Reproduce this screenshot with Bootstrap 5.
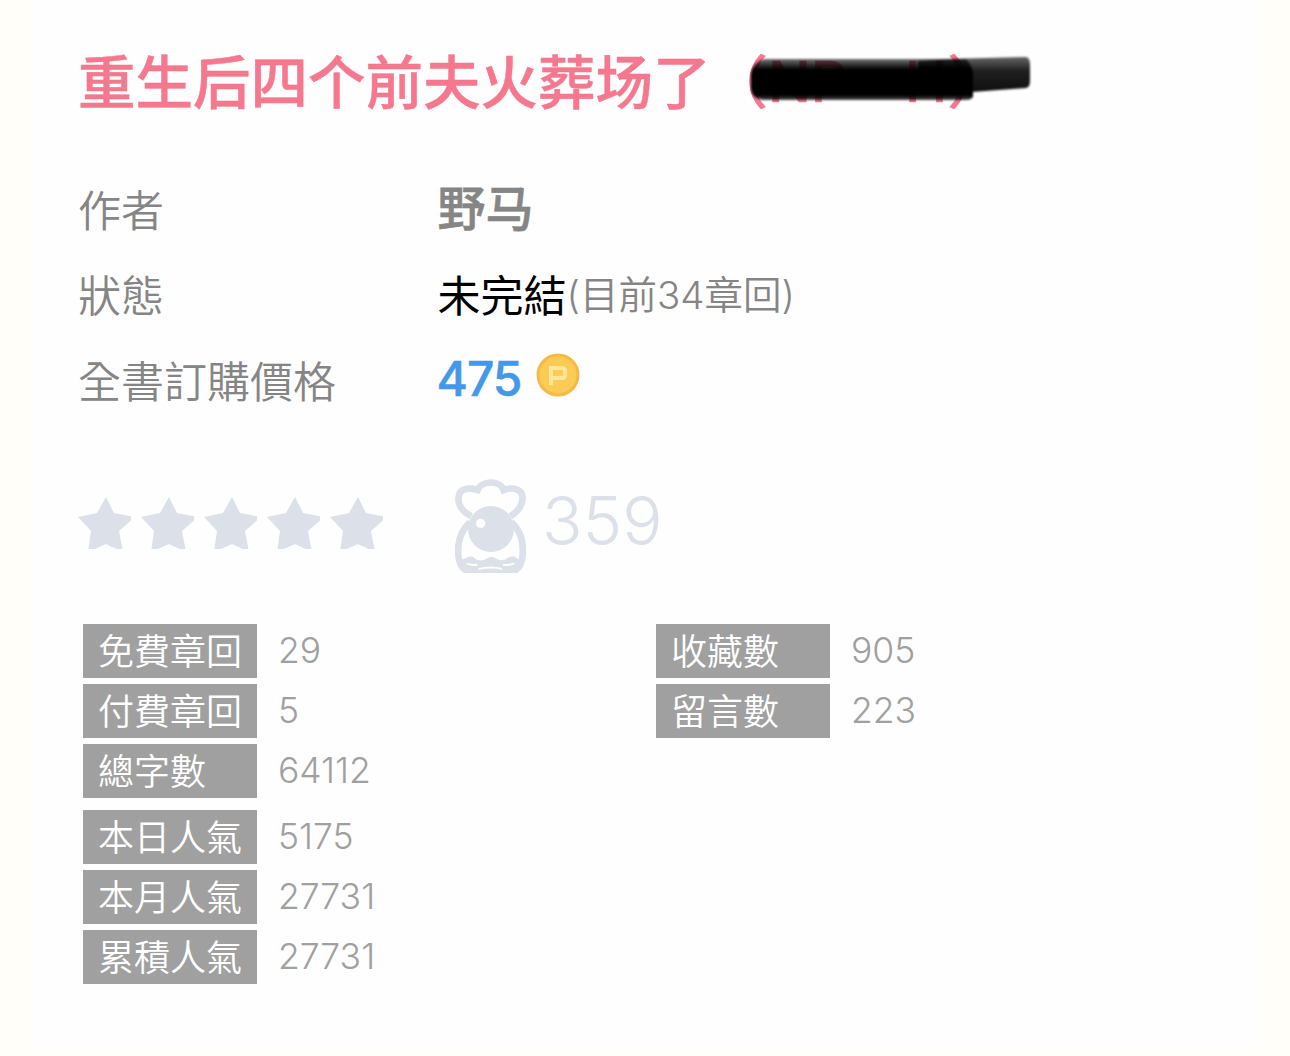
<!DOCTYPE html>
<html lang="zh-Hant">
<head>
    <title>重生后四个前夫火葬场了</title>
    <meta charset="UTF-8">
    <meta name="viewport" content="width=device-width, initial-scale=1">

    <!-- Bootstrap 5 CSS -->
    <link href="https://cdn.jsdelivr.net/npm/bootstrap@5.3.0/dist/css/bootstrap.min.css" rel="stylesheet">

    <!-- Custom Styles -->
    <style>
        body {
            background-color: #fffef8;
            font-family: Inter, "Noto Sans CJK TC", sans-serif;
            color: #858585;
            overflow: hidden;
        }

        .book-panel {
            width: 1225px;
            height: 1050px;
            margin-left: 32px;
            padding: 53px 47px 0 46px;
            background-color: #fefefe;
        }

        .book-title {
            height: 60px;
            font-family: Inter, "Noto Sans CJK SC", sans-serif;
            font-size: 57.5px;
            line-height: 60px;
            font-weight: 500;
            color: #f5788e;
            white-space: pre;
            -webkit-text-stroke: .5px #f5788e;
        }

        .title-latin {
            font-size: 56.5px;
            line-height: 1;
            vertical-align: 2px;
        }

        .title-gap {
            padding-left: 43px;
        }

        .scribble {
            left: 660px;
            top: -6px;
        }

        .info-list {
            margin-top: 55px;
            font-size: 43px;
            font-weight: 350;
        }

        .info-row {
            height: 85.5px;
        }

        .info-label {
            width: 359.5px;
        }

        .author-name {
            font-family: "Noto Sans CJK SC", sans-serif;
            font-size: 48px;
            font-weight: 500;
            line-height: 80px;
            -webkit-text-stroke: .6px #858585;
            padding-bottom: 12px;
        }

        .state-text {
            font-weight: 400;
        }

        .chapter-note {
            font-size: 38.5px;
        }

        .price {
            font-size: 48px;
            font-weight: 500;
            letter-spacing: -1.1px;
            color: #4398ea;
            -webkit-text-stroke: .5px #4398ea;
            padding-bottom: 5px;
            margin-left: -1px;
        }

        .coin {
            margin: 0 0 14px 15px;
        }

        .rating-row {
            height: 96px;
            margin-top: 53px;
        }

        .stars {
            gap: 10px;
            width: 377px;
            padding-bottom: 7px;
        }

        .icon-soft {
            filter: blur(.7px);
        }

        .heat {
            font-size: 67px;
            font-weight: 300;
            line-height: 80px;
            color: #dce0e8;
            padding-bottom: 10px;
            margin-left: 15px;
        }

        .stats {
            margin-top: 50px;
            padding-left: 5px;
            font-size: 36px;
            font-weight: 350;
            color: #a0a0a0;
        }

        .stat-col {
            width: 573px;
            gap: 6px;
            flex-shrink: 0;
        }

        .stat-row {
            height: 54px;
            gap: 21px;
        }

        .stat-split {
            margin-top: 6px;
        }

        .stat-label {
            width: 174px;
            padding-left: 15px;
            line-height: 56px;
            background-color: #a0a0a0;
        }

        .stat-value {
            font-size: 35.5px;
            line-height: 54px;
        }
    </style>
</head>
<body>

<div class="book-panel">
    <div class="position-relative">
        <h1 class="book-title mb-0">重生后四个前夫火葬场了（<span class="title-latin">NP <span class="title-gap"></span>H</span>）</h1>
        <svg class="scribble position-absolute" width="310" height="70" viewBox="0 0 310 70">
            <defs>
                <linearGradient id="ink" x1="0" y1="0" x2="0" y2="1">
                    <stop offset="0" stop-color="#000" stop-opacity=".55"/>
                    <stop offset=".14" stop-color="#000" stop-opacity=".8"/>
                    <stop offset=".26" stop-color="#000" stop-opacity="1"/>
                    <stop offset=".88" stop-color="#000" stop-opacity="1"/>
                    <stop offset="1" stop-color="#000" stop-opacity=".7"/>
                </linearGradient>
                <linearGradient id="tail" x1="0" y1="0" x2="0" y2="1">
                    <stop offset="0" stop-color="#000" stop-opacity=".6"/>
                    <stop offset=".4" stop-color="#000" stop-opacity=".88"/>
                    <stop offset="1" stop-color="#000" stop-opacity=".94"/>
                </linearGradient>
                <filter id="soft"><feGaussianBlur stdDeviation="1.2"/></filter>
            </defs>
            <g filter="url(#soft)">
                <path d="M180 14L210 12L288 10Q292 11 292 17V34Q292 40 288 41L234 45L180 40Z" fill="url(#tail)"/>
                <path d="M26 12H228Q235 20 235 27V50Q233 53 228 53H24Q13 51 13 40V27Q15 15 26 12Z" fill="url(#ink)"/>
            </g>
        </svg>
    </div>

    <div class="info-list">
        <div class="info-row d-flex align-items-center">
            <div class="info-label">作者</div>
            <div class="author-name">野马</div>
        </div>
        <div class="info-row d-flex align-items-center">
            <div class="info-label">狀態</div>
            <div class="d-flex align-items-center"><span class="state-text text-black">未完結</span><span class="chapter-note">(目前34章回)</span></div>
        </div>
        <div class="info-row d-flex align-items-center">
            <div class="info-label">全書訂購價格</div>
            <div class="price">475</div>
            <svg class="coin icon-soft" width="44" height="44" viewBox="0 0 44 44">
                <circle cx="22" cy="22" r="20" fill="#fccb55" stroke="#f3ba45" stroke-width="3"/>
                <path d="M15 32V15H26Q29 15 29 18V22Q29 25 26 25H16" fill="none" stroke="#ffe797" stroke-width="4"/>
            </svg>
        </div>
    </div>

    <div class="rating-row d-flex align-items-center">
        <div class="stars d-flex" id="stars"></div>
        <svg class="mascot icon-soft" width="72" height="94" viewBox="77 42 216 282">
            <g fill="none" stroke="#dce0e8" stroke-width="20">
                <path d="M126 154C103 142 84 121 88 96C89 72 114 66 145 75C155 47 211 43 223 75C254 64 279 75 280 98C279 124 262 142 243 154"/>
                <path d="M122 172C93 198 84 232 87 270C89 301 100 314 120 321M246 172C275 198 283 232 280 270C278 301 268 314 248 321"/>
            </g>
            <circle cx="185" cy="192" r="69" fill="#dce0e8"/>
            <circle cx="154" cy="175" r="14" fill="#fefefe"/>
            <path d="M88 266Q98 290 110 279Q129 269 140 283Q157 292 174 280Q187 270 201 281Q220 292 234 279Q252 268 263 280Q271 290 280 266V292Q274 315 255 324H116Q94 315 88 292Z" fill="#dce0e8"/>
            <path d="M112 296Q128 302 144 299M221 299Q238 302 255 295M148 312Q186 303 218 312" fill="none" stroke="#fefefe" stroke-width="6"/>
        </svg>
        <div class="heat">359</div>
    </div>

    <div class="stats d-flex">
        <div class="stat-col d-flex flex-column">
            <div class="stat-row d-flex"><div class="stat-label text-white">免費章回</div><div class="stat-value">29</div></div>
            <div class="stat-row d-flex"><div class="stat-label text-white">付費章回</div><div class="stat-value">5</div></div>
            <div class="stat-row d-flex"><div class="stat-label text-white">總字數</div><div class="stat-value">64112</div></div>
            <div class="stat-row stat-split d-flex"><div class="stat-label text-white">本日人氣</div><div class="stat-value">5175</div></div>
            <div class="stat-row d-flex"><div class="stat-label text-white">本月人氣</div><div class="stat-value">27731</div></div>
            <div class="stat-row d-flex"><div class="stat-label text-white">累積人氣</div><div class="stat-value">27731</div></div>
        </div>
        <div class="stat-col d-flex flex-column">
            <div class="stat-row d-flex"><div class="stat-label text-white">收藏數</div><div class="stat-value">905</div></div>
            <div class="stat-row d-flex"><div class="stat-label text-white">留言數</div><div class="stat-value">223</div></div>
        </div>
    </div>
</div>

<script src="https://cdn.jsdelivr.net/npm/bootstrap@5.3.0/dist/js/bootstrap.bundle.min.js"></script>
<script>
    const star = '<svg class="icon-soft" width="53" height="53" viewBox="0 0 53 53"><path d="M28 1L36 17L57 21L41 35L45 56L28 48L10 56L13 35L0 21L19 17Z" fill="#dce0e8"/></svg>';
    document.getElementById("stars").innerHTML = star.repeat(5);
</script>

</body>
</html>
